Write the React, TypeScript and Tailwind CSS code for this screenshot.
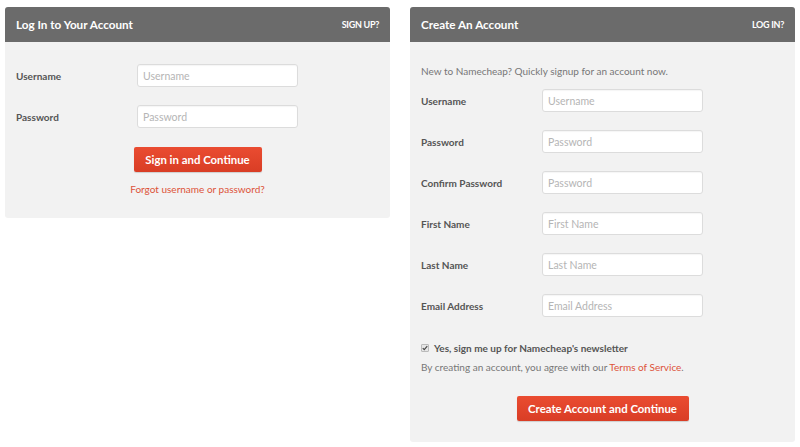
import React from "react";

type Field = { label: string; placeholder: string; type?: string };

const loginFields: Field[] = [
  { label: "Username", placeholder: "Username" },
  { label: "Password", placeholder: "Password", type: "password" },
];

const signupFields: Field[] = [
  { label: "Username", placeholder: "Username" },
  { label: "Password", placeholder: "Password", type: "password" },
  { label: "Confirm Password", placeholder: "Password", type: "password" },
  { label: "First Name", placeholder: "First Name" },
  { label: "Last Name", placeholder: "Last Name" },
  { label: "Email Address", placeholder: "Email Address" },
];

function PanelHeader({ title, link }: { title: string; link: string }) {
  return (
    <div className="flex h-[35px] items-center justify-between rounded-t-[3px] bg-[#6b6b6b] px-[11px] text-white">
      <h2 className="text-[11.7px] font-bold">{title}</h2>
      <a href="#" className="text-[9px] font-bold tracking-[-0.3px]">
        {link}
      </a>
    </div>
  );
}

function FieldRow({ field }: { field: Field }) {
  return (
    <div className="flex items-center">
      <label className="w-[121px] pt-[2px] text-[10px] font-bold text-[#555]">{field.label}</label>
      <input
        type={field.type ?? "text"}
        placeholder={field.placeholder}
        className="h-[23px] w-[161px] rounded-[3px] border border-[#dcdcdc] bg-white px-[5px] text-[10.5px] text-[#555] shadow-[inset_0_1px_1px_rgba(0,0,0,0.04)] outline-none placeholder:text-[#b5b5b5]"
      />
    </div>
  );
}

function RedButton({ children, width }: { children: React.ReactNode; width: string }) {
  return (
    <button
      className={`h-[25px] ${width} rounded-[2px] bg-gradient-to-b from-[#ea4c31] to-[#d93d25] text-[11.4px] font-bold text-white shadow-[0_1px_1px_rgba(0,0,0,0.15)]`}
    >
      {children}
    </button>
  );
}

export default function App() {
  return (
    <div
      className="flex h-[447px] w-[800px] items-start gap-[20px] bg-white px-[5px] pt-[7px]"
      style={{ fontFamily: "Lato, 'Open Sans', sans-serif" }}
    >
      {/* log in */}
      <div className="w-[385px] rounded-[3px] bg-[#f2f2f2]">
        <PanelHeader title="Log In to Your Account" link="SIGN UP?" />
        <div className="px-[11px] pb-[21px] pt-[22px]">
          <div className="flex flex-col gap-[18px]">
            {loginFields.map((f) => (
              <FieldRow key={f.label} field={f} />
            ))}
          </div>
          <div className="mt-[19px] flex justify-center">
            <RedButton width="w-[128px]">Sign in and Continue</RedButton>
          </div>
          <p className="mt-[9px] text-center text-[10px] leading-[16px]">
            <a href="#" className="text-[#dd5339]">
              Forgot username or password?
            </a>
          </p>
        </div>
      </div>

      {/* sign up */}
      <div className="w-[385px] rounded-[3px] bg-[#f2f2f2]">
        <PanelHeader title="Create An Account" link="LOG IN?" />
        <div className="px-[11px] pb-[21px] pt-[21px]">
          <p className="text-[10px] leading-[16px] text-[#777]">
            New to Namecheap? Quickly signup for an account now.
          </p>
          <div className="mt-[10px] flex flex-col gap-[18px]">
            {signupFields.map((f) => (
              <FieldRow key={f.label} field={f} />
            ))}
          </div>
          <label className="mt-[23px] flex items-center gap-[5px] text-[10px] font-bold leading-[16px] text-[#555]">
            <span className="flex h-[8px] w-[8px] items-center justify-center rounded-[1px] border border-[#bbb] bg-[#e6e6e6]">
              <svg viewBox="0 0 8 8" className="h-[6px] w-[6px]">
                <path d="M1 4.2 L3 6.2 L7 1.5" fill="none" stroke="#444" strokeWidth="1.5" />
              </svg>
            </span>
            Yes, sign me up for Namecheap's newsletter
          </label>
          <p className="mt-[3px] text-[10px] leading-[16px] text-[#777]">
            By creating an account, you agree with our{" "}
            <a href="#" className="text-[#dd5339]">
              Terms of Service
            </a>
            .
          </p>
          <div className="mt-[21px] flex justify-center">
            <RedButton width="w-[172px]">Create Account and Continue</RedButton>
          </div>
        </div>
      </div>
    </div>
  );
}
